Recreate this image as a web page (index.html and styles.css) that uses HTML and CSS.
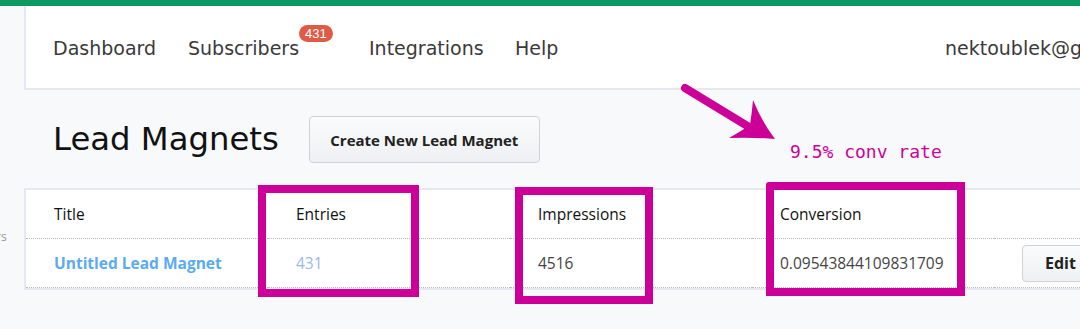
FILE: index.html
```html
<!DOCTYPE html>
<html>
<head>
<meta charset="utf-8">
<link rel="stylesheet" href="styles.css">
</head>
<body>
<div class="topbar"></div>
<div class="side-label">rs</div>
<div class="page">
  <nav class="nav">
    <a class="nav-item w-dash">Dashboard</a>
    <a class="nav-item w-subs">Subscribers<span class="badge">431</span></a>
    <a class="nav-item w-int">Integrations</a>
    <a class="nav-item w-help">Help</a>
    <span class="nav-item">nektoublek@gmail.com</span>
  </nav>
  <div class="title-row">
    <h1 class="title">Lead Magnets</h1>
    <button class="btn btn-create">Create New Lead Magnet</button>
  </div>
  <div class="table-card">
    <table class="table">
      <thead>
        <tr><th>Title</th><th>Entries</th><th>Impressions</th><th>Conversion</th><th></th></tr>
      </thead>
      <tbody>
        <tr>
          <td><a class="lm-link">Untitled Lead Magnet</a></td>
          <td class="entries">431</td>
          <td>4516</td>
          <td>0.09543844109831709</td>
          <td><button class="btn btn-edit">Edit</button></td>
        </tr>
      </tbody>
    </table>
  </div>
</div>

<div class="mark box1"></div>
<div class="mark box2"></div>
<div class="mark box3"></div>
<svg class="arrow" width="110" height="70" viewBox="0 0 110 70">
  <line x1="5" y1="8" x2="74" y2="50" stroke="#cc0099" stroke-width="8" stroke-linecap="round"/>
  <path d="M73,20 Q82,42 95,59 Q72,57 49,58 Q63,50 70,45 Q72,32 73,20Z" fill="#cc0099"/>
</svg>
<div class="note">9.5% conv rate</div>
</body>
</html>
```

FILE: styles.css
```css
html, body {
  margin: 0;
  padding: 0;
}
body {
  background: #f8f9fb;
  width: 1080px;
  height: 329px;
  overflow: hidden;
  position: relative;
  font-family: "Open Sans", "Noto Sans", sans-serif;
}
.topbar {
  height: 6px;
  background: #0c9a62;
}
.page {
  padding-left: 24px;
  width: 1240px;
}
.nav {
  background: #fff;
  border-left: 2px solid #e6e8ef;
  border-bottom: 2px solid #e6e8ef;
  height: 80px;
  padding-top: 2px;
  display: flex;
  align-items: center;
  padding-left: 27px;
  font-family: "DejaVu Sans", sans-serif;
  font-size: 19px;
  color: #3a3a3a;
  white-space: nowrap;
}
.nav-item {
  position: relative;
  line-height: 24px;
  flex: none;
}
.w-dash { width: 135px; }
.w-subs { width: 181px; }
.w-int { width: 146px; }
.w-help { width: 430px; }
.badge {
  position: absolute;
  left: 111px;
  top: -11px;
  background: #e05b45;
  color: #fff;
  font-family: "Liberation Sans", sans-serif;
  font-size: 13px;
  line-height: 17px;
  padding: 0 6px;
  border-radius: 9px;
}
.title-row {
  display: flex;
  align-items: center;
  height: 98px;
  padding-left: 29px;
}
.title {
  margin: 0;
  font-family: "DejaVu Sans", sans-serif;
  font-size: 32.3px;
  font-weight: normal;
  color: #111;
  margin-right: 30px;
}
.btn {
  font-family: "Open Sans", sans-serif;
  font-weight: 700;
  font-size: 15px;
  color: #222;
  background: linear-gradient(#fafbfc, #eef0f3);
  border: 1px solid #cfd3d8;
  border-radius: 4px;
}
.btn-create {
  width: 231px;
  height: 47px;
  margin-top: 1px;
}
.table-card {
  background: #fff;
  border-left: 2px solid #e6e8ef;
  border-top: 2px solid #e6e8ef;
  border-bottom: 2px solid #e6e8ef;
}
.table {
  border-collapse: collapse;
  font-size: 15.5px;
  color: #111;
}
.table th, .table td {
  width: 214px;
  padding: 0 0 0 28px;
  text-align: left;
}
.table th {
  font-weight: normal;
  height: 48px;
  border-bottom: 1px dotted #bbb;
}
.table td {
  height: 48px;
  color: #444;
  border-bottom: 1px dotted #bbb;
}
.lm-link {
  color: #5aabf0;
  font-weight: 700;
}
.table td.entries {
  color: #9ab7ea;
}
.btn-edit {
  width: 80px;
  height: 37px;
  font-size: 16px;
  text-align: left;
  padding-left: 22px;
}
.side-label {
  position: absolute;
  left: -4px;
  top: 228px;
  font-size: 12px;
  color: #999;
}
.mark {
  position: absolute;
  border: 8px solid #cc0099;
  box-sizing: border-box;
}
.box1 { left: 258px; top: 185px; width: 161px; height: 112px; }
.box2 { left: 515px; top: 187px; width: 138px; height: 117px; }
.box3 { left: 766px; top: 182px; width: 199px; height: 114px; border-top-left-radius: 3px; }
.arrow {
  position: absolute;
  left: 680px;
  top: 80px;
}
.note {
  position: absolute;
  left: 790px;
  top: 141px;
  font-family: "DejaVu Sans Mono", monospace;
  font-size: 18px;
  color: #cc0099;
}
```
